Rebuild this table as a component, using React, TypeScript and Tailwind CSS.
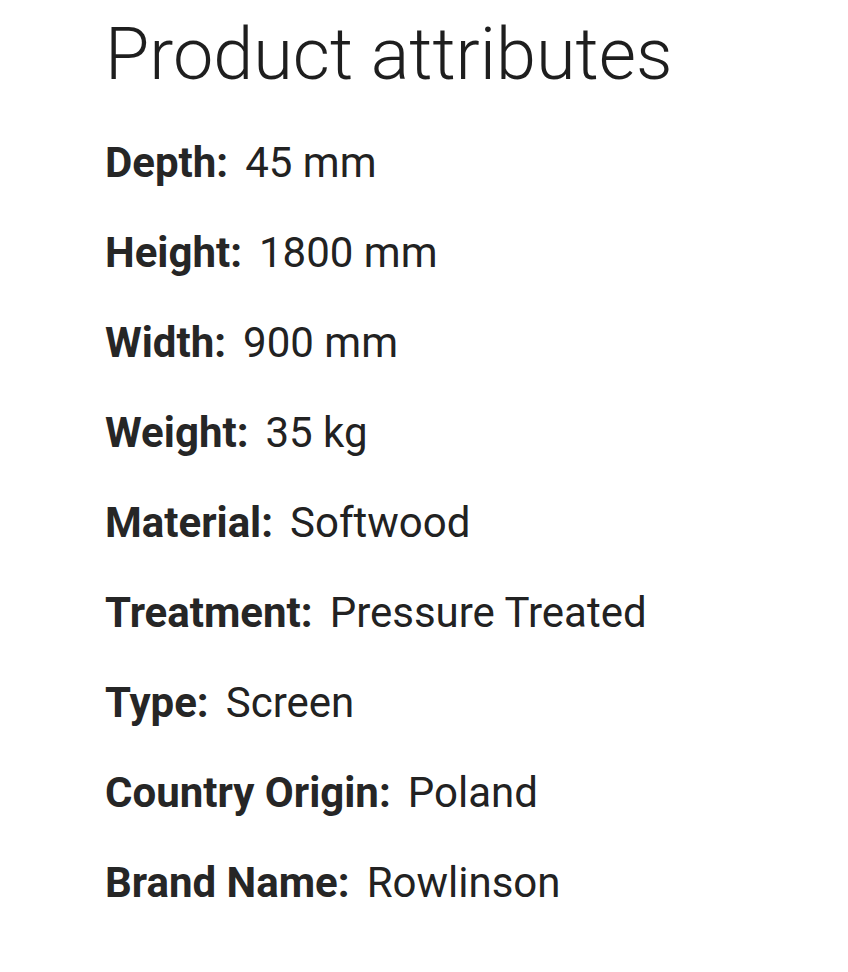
import React from 'react';

const attributes: [string, string][] = [
    ['Depth:', '45 mm'],
    ['Height:', '1800 mm'],
    ['Width:', '900 mm'],
    ['Weight:', '35 kg'],
    ['Material:', 'Softwood'],
    ['Treatment:', 'Pressure Treated'],
    ['Type:', 'Screen'],
    ['Country Origin:', 'Poland'],
    ['Brand Name:', 'Rowlinson'],
];

export default function App() {
    return (
        <div className="min-h-screen bg-white text-[#222] font-['Roboto',sans-serif] pl-[105px] pt-[10px]">
            <h1 className="text-[72px] font-light leading-[90px] text-[#1e1e1e]">Product attributes</h1>
            <div className="flex flex-col mt-[18px]">
                {attributes.map(([label, value]) => (
                    <div key={label} className="flex items-baseline gap-[17px] h-[90px] text-[42px] leading-[90px]">
                        <span className="font-bold text-[#262626]">{label}</span>
                        <span className="text-[#222]">{value}</span>
                    </div>
                ))}
            </div>
        </div>
    );
}
